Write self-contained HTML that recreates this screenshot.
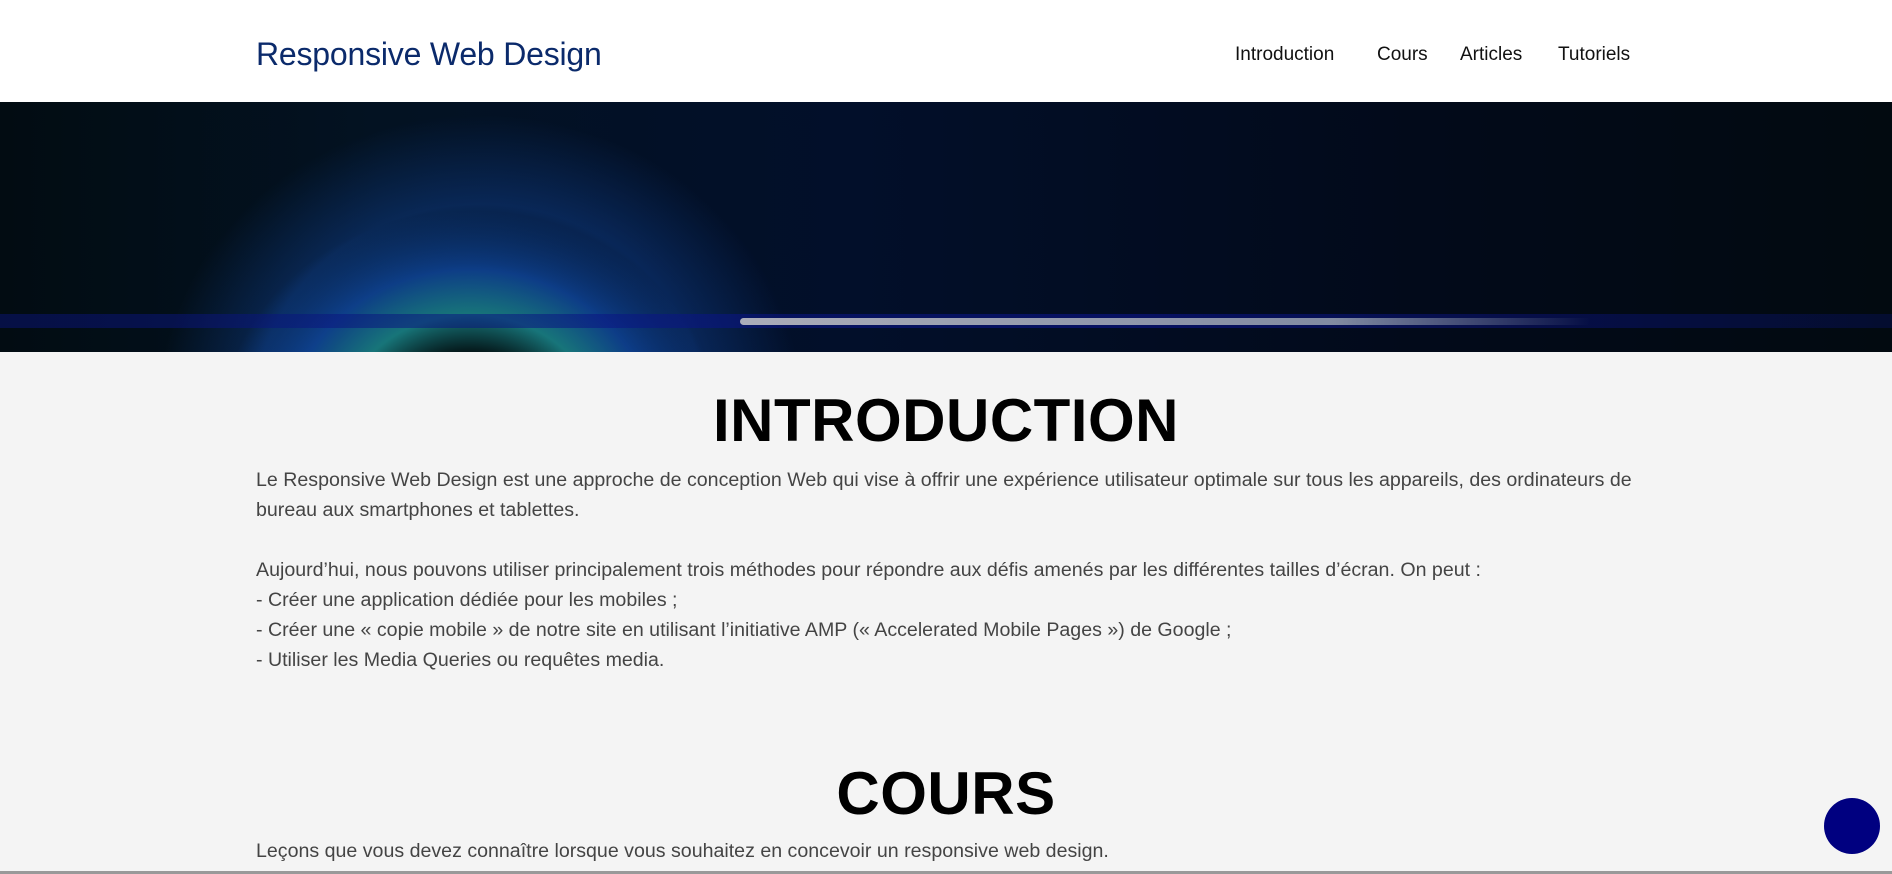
<!DOCTYPE html>
<html><head><meta charset="utf-8"><style>
*{margin:0;padding:0;box-sizing:border-box}
body{width:1892px;height:874px;overflow:hidden;background:#f4f4f4;font-family:"Liberation Sans",sans-serif;position:relative}
header{height:102px;background:#fff;position:relative}
.logo{position:absolute;left:256px;top:36px;font-size:32px;color:#0b2a6b;letter-spacing:-0.2px}
nav{position:absolute;top:44px;font-size:19px;color:#111}
nav span{position:absolute;white-space:nowrap}
.banner{position:absolute;top:102px;left:0;width:1892px;height:250px;overflow:hidden;
background:linear-gradient(90deg,#020c12 0%,#031222 20%,#020f2a 45%,#020a1a 75%,#020a10 100%)}
.glow{position:absolute;border-radius:50%}
h1{position:absolute;left:0;width:1892px;text-align:center;font-size:60px;font-weight:bold;color:#000;letter-spacing:0.5px}
.p{position:absolute;left:256px;font-size:19.6px;color:#444;line-height:30px;white-space:nowrap}
.dot{position:absolute;left:1824px;top:798px;width:56px;height:56px;border-radius:50%;background:#000080}
.line{position:absolute;left:0;top:871px;width:1892px;height:3px;background:#999}
</style></head><body>
<header>
<div class="logo">Responsive Web Design</div>
<nav><span style="left:1235px">Introduction</span><span style="left:1377px">Cours</span><span style="left:1460px">Articles</span><span style="left:1558px">Tutoriels</span></nav>
</header>
<div class="banner">
<div class="glow" style="left:100px;top:-40px;width:760px;height:700px;background:radial-gradient(ellipse at 50% 50%,rgba(10,40,120,0) 30%,rgba(20,80,180,0.35) 42%,rgba(10,40,120,0) 60%)"></div>
<div class="glow" style="left:210px;top:100px;width:520px;height:460px;background:radial-gradient(ellipse at 50% 50%,rgba(0,0,0,0.9) 22%,rgba(30,150,150,0.75) 36%,rgba(20,90,200,0.6) 50%,rgba(10,40,120,0) 68%)"></div>
<div style="position:absolute;left:0;top:212px;width:1892px;height:14px;background:linear-gradient(90deg,rgba(10,20,120,0.5),rgba(10,20,140,0.6) 60%,rgba(10,20,120,0.3))"></div>
<div style="position:absolute;left:740px;top:216px;width:850px;height:7px;border-radius:4px;background:linear-gradient(90deg,rgba(200,200,200,0.85),rgba(160,170,180,0.8) 70%,rgba(100,110,160,0))"></div>
</div>
<h1 style="top:386px">INTRODUCTION</h1>
<div class="p" style="top:465px">Le Responsive Web Design est une approche de conception Web qui vise à offrir une expérience utilisateur optimale sur tous les appareils, des ordinateurs de<br>bureau aux smartphones et tablettes.</div>
<div class="p" style="top:555px">Aujourd’hui, nous pouvons utiliser principalement trois méthodes pour répondre aux défis amenés par les différentes tailles d’écran. On peut :<br>- Créer une application dédiée pour les mobiles ;<br>- Créer une « copie mobile » de notre site en utilisant l’initiative AMP (« Accelerated Mobile Pages ») de Google ;<br>- Utiliser les Media Queries ou requêtes media.</div>
<h1 style="top:759px">COURS</h1>
<div class="p" style="top:836px">Leçons que vous devez connaître lorsque vous souhaitez en concevoir un responsive web design.</div>
<div class="dot"></div>
<div class="line"></div>
</body></html>
